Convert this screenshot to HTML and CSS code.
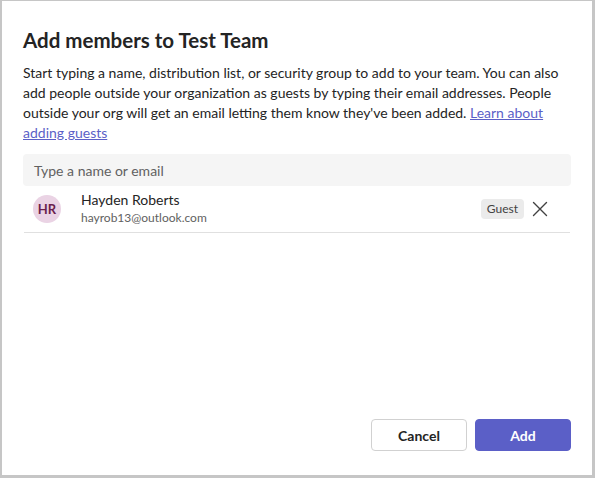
FILE: index.html
```html
<!DOCTYPE html>
<html>
<head>
<meta charset="utf-8">
<link rel="stylesheet" href="styles.css">
</head>
<body>
<div class="frame">
  <div class="dialog">
    <h1 class="title">Add members to Test Team</h1>
    <p class="desc">Start typing a name, distribution list, or security group to add to your team. You can also add people outside your organization as guests by typing their email addresses. People outside your org will get an email letting them know they've been added. <a href="#" class="link">Learn about adding guests</a></p>
    <div class="input">Type a name or email</div>
    <div class="member">
      <div class="avatar">HR</div>
      <div class="info">
        <div class="name">Hayden Roberts</div>
        <div class="email">hayrob13@outlook.com</div>
      </div>
      <span class="badge">Guest</span>
      <svg class="close" width="16" height="16" viewBox="0 0 16 16"><path d="M1.5 1.5 L14.5 14.5 M14.5 1.5 L1.5 14.5" stroke="#424242" stroke-width="1.4" fill="none" stroke-linecap="round"/></svg>
    </div>
    <div class="spacer"></div>
    <div class="actions">
      <button class="btn btn-secondary">Cancel</button>
      <button class="btn btn-primary">Add</button>
    </div>
  </div>
</div>
</body>
</html>
```
FILE: styles.css
```css
html, body {
  margin: 0;
  padding: 0;
}
body {
  width: 595px;
  height: 478px;
  background: #c6c6c6;
  font-family: "Segoe UI", Lato, "Noto Sans", sans-serif;
  color: #242424;
}
.frame {
  padding: 1px 3px 3px 2px;
  height: 478px;
  box-sizing: border-box;
}
.dialog {
  background: #fff;
  height: 100%;
  box-sizing: border-box;
  padding: 25px 21px 24px 21px;
  display: flex;
  flex-direction: column;
}
.title {
  margin: 0;
  font-size: 20.5px;
  font-weight: 700;
  line-height: 28px;
}
.desc {
  margin: 9px 0 0;
  font-size: 14px;
  line-height: 20px;
  color: #242424;
}
.link {
  color: #5b5fc7;
  text-decoration: underline;
}
.input {
  margin-top: 11px;
  height: 32px;
  background: #f5f5f5;
  border-radius: 4px;
  padding: 0 11px;
  display: flex;
  align-items: center;
  font-size: 14px;
  color: #616161;
}
.member {
  display: flex;
  align-items: center;
  margin: 0 1px;
  height: 46px;
  border-bottom: 1px solid #e0e0e0;
  padding-left: 9px;
  padding-right: 22px;
}
.avatar {
  width: 28px;
  height: 28px;
  border-radius: 50%;
  background: #ead3e4;
  color: #6b1f4d;
  font-size: 13px;
  font-weight: 700;
  display: flex;
  align-items: center;
  justify-content: center;
}
.info {
  margin-left: 20px;
  flex: 1;
}
.name {
  font-size: 14px;
  line-height: 18px;
}
.email {
  font-size: 12px;
  line-height: 18px;
  color: #616161;
}
.badge {
  background: #ebebeb;
  border-radius: 4px;
  font-size: 12px;
  color: #424242;
  padding: 2px 6px;
  line-height: 16px;
}
.close {
  margin-left: 8px;
}
.spacer {
  flex: 1;
}
.actions {
  display: flex;
  justify-content: flex-end;
  gap: 8px;
}
.btn {
  width: 96px;
  height: 32px;
  border-radius: 4px;
  font-family: inherit;
  font-size: 14px;
  font-weight: 700;
}
.btn-secondary {
  background: #fff;
  border: 1px solid #d1d1d1;
  color: #242424;
}
.btn-primary {
  background: #5b5fc7;
  border: 1px solid #5b5fc7;
  color: #fff;
}
```
